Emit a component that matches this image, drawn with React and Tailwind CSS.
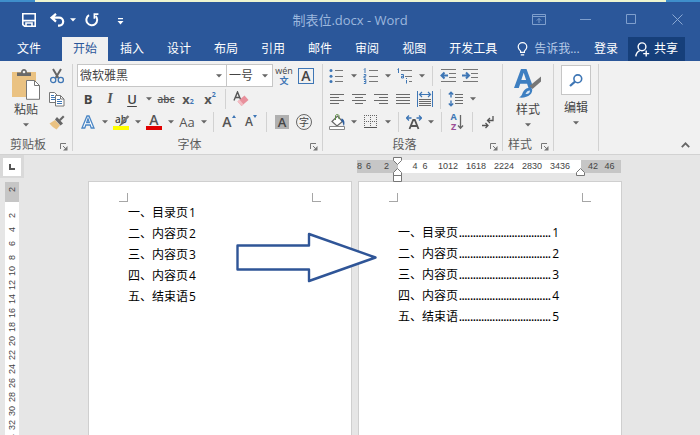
import clsx from 'clsx'

const TABS = ['插入', '设计', '布局', '引用', '邮件', '审阅', '视图', '开发工具']

const ENTRIES = [
  { mark: '一、', title: '目录页', page: 1 },
  { mark: '二、', title: '内容页', page: 2 },
  { mark: '三、', title: '内容页', page: 3 },
  { mark: '四、', title: '内容页', page: 4 },
  { mark: '五、', title: '结束语', page: 5 },
]

const LEADER = '.'.repeat(33)

const RULER_STEPS = ['4  6', '1012', '1618', '2224', '2830', '3436']
const SIDE_STEPS = [2, 4, 6, 8, 10, 12, 14, 16, 18, 20, 22, 24, 26, 28, 30, 32, 34]

/* ---------- small building blocks ---------- */

function Arrow({ className, color = '#666' }) {
  return (
    <svg width="6" height="4" viewBox="0 0 6 4" className={className} aria-hidden="true">
      <path d="M0 0.3h6L3 3.6z" fill={color} />
    </svg>
  )
}

function Caret({ className = 'w-3' }) {
  return (
    <button type="button" aria-label="更多" className={clsx('flex h-full shrink-0 items-center justify-center', className)}>
      <Arrow />
    </button>
  )
}

function Tool({ label, children }) {
  return (
    <button
      type="button"
      aria-label={label}
      className="flex h-full w-[22px] shrink-0 items-center justify-center hover:bg-[#d5e1f2]"
    >
      {children}
    </button>
  )
}

function Icon({ children }) {
  return (
    <svg width="16" height="16" viewBox="0 0 16 16" fill="none" aria-hidden="true">
      {children}
    </svg>
  )
}

function Divider() {
  return <div className="mx-1 h-5 w-px shrink-0 bg-[#d2d2d2]" />
}

function Row({ children }) {
  return <div className="flex h-[23px] items-center">{children}</div>
}

function Group({ title, launcher = true, className, children }) {
  return (
    <section className={clsx('flex shrink-0 pt-[3px]', className)}>
      <div className="flex min-w-0 flex-1 flex-col">
        <div className="h-[69px] shrink-0">{children}</div>
        <div className="flex h-6 shrink-0 items-center text-[#5c5c5c]">
          <span className="flex-1 text-center">{title}</span>
          {launcher && (
            <button type="button" aria-label={`${title}设置`} className="flex w-4 items-center pt-1 pl-1">
              <svg width="8" height="8" viewBox="0 0 8 8" fill="none" stroke="#777" aria-hidden="true">
                <path d="M0.5 6V0.5H6M3 3l3 3" />
                <path d="M7.5 3v4.5H3z" fill="#777" stroke="none" />
              </svg>
            </button>
          )}
        </div>
      </div>
      <div className="mb-[3px] w-px bg-[#d2d2d2]" />
    </section>
  )
}

/* ---------- title bar and tabs ---------- */

function TitleBar() {
  return (
    <header className="grid h-[35px] shrink-0 grid-cols-[1fr_auto_1fr] items-center text-white">
      <div className="flex items-center pl-[22px]">
        <button type="button" aria-label="保存">
          <svg width="14" height="14" viewBox="0 0 14 14" fill="none" stroke="#fff" strokeWidth="1.6" aria-hidden="true">
            <path d="M0.8 0.8h12.4v12.4H2.6L0.8 11.6zM1 7.6h12" />
            <path d="M4 13V10h6v3" />
          </svg>
        </button>
        <button type="button" aria-label="撤消" className="ml-[14px]">
          <svg width="15" height="14" viewBox="0 0 15 14" fill="none" stroke="#fff" strokeWidth="2.2" aria-hidden="true">
            <path d="M6 0.8L1.6 4.6 6 8.6M2 4.6h7.2a4 4 0 0 1 0 8H8" />
          </svg>
        </button>
        <button type="button" aria-label="撤消列表" className="ml-[5px]">
          <Arrow color="#fff" />
        </button>
        <button type="button" aria-label="重复" className="ml-[9px]">
          <svg width="14" height="14" viewBox="0 0 14 14" fill="none" stroke="#fff" strokeWidth="2" aria-hidden="true">
            <path d="M4 2.2A5.4 5.4 0 1 0 10.6 3" />
            <path d="M13.4 1.2H9.4v4.6" strokeWidth="1.7" />
          </svg>
        </button>
        <button type="button" aria-label="自定义快速访问工具栏" className="mt-1 ml-[18px]">
          <svg width="7" height="7" viewBox="0 0 7 7" aria-hidden="true">
            <path d="M1 0h5v1.2H1zM0.5 3h6L3.5 6.4z" fill="#fff" />
          </svg>
        </button>
      </div>
      <h1 className="text-[13px] text-[#9db8de]">制表位.docx - Word</h1>
      <div className="flex justify-end">
        <button type="button" aria-label="功能区显示选项" className="flex w-[46px] justify-center">
          <svg width="14" height="11" viewBox="0 0 14 11" fill="none" stroke="#7f9fcd" aria-hidden="true">
            <path d="M0.5 0.5h13v10H0.5zM0.5 2.5h13M7 9V4.5M4.8 6.6L7 4.4l2.2 2.2" />
          </svg>
        </button>
        <button type="button" aria-label="最小化" className="flex w-[46px] items-center justify-center">
          <svg width="11" height="1" viewBox="0 0 11 1" aria-hidden="true">
            <path d="M0 0h11v1H0z" fill="#7f9fcd" />
          </svg>
        </button>
        <button type="button" aria-label="最大化" className="flex w-[46px] justify-center">
          <svg width="10" height="10" viewBox="0 0 10 10" fill="none" stroke="#7f9fcd" aria-hidden="true">
            <path d="M0.5 0.5h9v9h-9z" />
          </svg>
        </button>
        <button type="button" aria-label="关闭" className="flex w-[46px] justify-center">
          <svg width="11" height="11" viewBox="0 0 11 11" fill="none" stroke="#8aa8d3" aria-hidden="true">
            <path d="M0.5 0.5l10 10M10.5 0.5l-10 10" />
          </svg>
        </button>
      </div>
    </header>
  )
}

function TabBar() {
  return (
    <nav className="flex h-6 shrink-0 items-stretch gap-px pr-[15px] pl-[6px] text-white">
      <button type="button" className="mr-[9px] shrink-0 px-[11px]">文件</button>
      <button type="button" className="shrink-0 bg-[#f1f1f1] px-[11px] text-[#2b579a]">开始</button>
      {TABS.map((tab) => (
        <button key={tab} type="button" className="shrink-0 px-[11px]">
          {tab}
        </button>
      ))}
      <button type="button" className="ml-2 flex shrink-0 items-center gap-[6px] text-[#b7cbe8]">
        <svg width="11" height="14" viewBox="0 0 11 14" fill="none" stroke="#fff" strokeWidth="1.2" aria-hidden="true">
          <path d="M3.6 10.4V9.2C2.2 7.8 1.2 6.8 1.2 4.9a4.3 4.3 0 0 1 8.6 0c0 1.9-1 2.9-2.4 4.3v1.2zM3.8 12.9h3.4" />
        </svg>
        告诉我...
      </button>
      <div className="ml-auto flex shrink-0 gap-[10px]">
        <button type="button">登录</button>
        <button type="button" className="flex items-center gap-1 bg-[#163f7a] px-[7px]">
          <svg width="15" height="15" viewBox="0 0 15 15" fill="none" stroke="#fff" strokeWidth="1.4" aria-hidden="true">
            <circle cx="7" cy="4.8" r="3.9" />
            <path d="M0.8 14.4c0.3-3 1.6-4.8 4-5.8M11.2 8.6v6M8.2 11.6h6" />
          </svg>
          共享
        </button>
      </div>
    </nav>
  )
}

/* ---------- ribbon ---------- */

function ClipboardGroup() {
  return (
    <Group title="剪贴板" className="w-[73px]">
      <div className="flex pl-[6px]">
        <button type="button" className="flex w-10 flex-col items-center pt-[5px] text-[#444]">
          <svg width="28" height="31" viewBox="0 0 28 31" aria-hidden="true">
            <path d="M0 3h24v25H0z" fill="#eac282" />
            <path d="M5 7V3.4h4C9 1.4 10.2 0 12 0s3 1.4 3 3.4h4V7z" fill="#6a6a6a" />
            <circle cx="12" cy="3" r="1.3" fill="#f1f1f1" />
            <path d="M14.5 11.5h8l5 5v13.8h-13z" fill="#fff" stroke="#777" />
            <path d="M22.5 11.5v5h5" fill="none" stroke="#777" />
          </svg>
          <span className="leading-[20px]">粘贴</span>
          <Arrow className="mt-[3px]" />
        </button>
        <div>
          <Row>
            <Tool label="剪切">
              <Icon>
                <path d="M4 1l5.4 9M12 1l-5.4 9" stroke="#666" strokeWidth="2" />
                <circle cx="4.2" cy="12" r="2.6" stroke="#3e76b5" strokeWidth="1.3" />
                <circle cx="11.8" cy="12" r="2.6" stroke="#3e76b5" strokeWidth="1.3" />
              </Icon>
            </Tool>
          </Row>
          <Row>
            <Tool label="复制">
              <Icon>
                <path d="M0.5 1.5h5l3 3v7h-8z" fill="#fff" stroke="#777" />
                <path d="M2 4.5h3M2 6.5h4M2 8.500h4" stroke="#3e76b5" />
                <path d="M6.5 4.5h5l3.5 3.500v7H6.500z" fill="#fff" stroke="#777" />
                <path d="M11.5 4.5V8H15" stroke="#777" />
                <path d="M8 8.5h3M8 10.5h5M8 12.500h5" stroke="#3e76b5" />
              </Icon>
            </Tool>
          </Row>
          <Row>
            <Tool label="格式刷">
              <Icon>
                <path d="M0.5 9.5L6 6l5 5.5-3.500 4C5 14 2.500 12 0.500 9.500z" fill="#eac282" />
                <path d="M6 5.5L8 3l6 6.5-2.500 2z" fill="#666" />
                <path d="M10 5.5l4-4L15.500 3l-4 4z" fill="#666" />
              </Icon>
            </Tool>
          </Row>
        </div>
      </div>
    </Group>
  )
}

function Combo({ label, value, className }) {
  return (
    <label className={clsx('relative flex h-[23px] shrink-0 items-center border border-[#c6c6c6] bg-white', className)}>
      <select aria-label={label} defaultValue={value} className="h-full w-full appearance-none bg-transparent pl-[2px] text-[#444] outline-none">
        <option>{value}</option>
      </select>
      <Arrow className="pointer-events-none absolute right-1" />
    </label>
  )
}

function FontGroup() {
  return (
    <Group title="字体" className="w-[250px]">
      <div className="pl-1">
        <Row>
          <Combo label="字体" value="微软雅黑" className="w-[150px]" />
          <Combo label="字号" value="一号" className="-ml-px w-[47px]" />
          <Tool label="拼音指南">
            <span className="flex flex-col items-center text-[9px] text-[#444]">
              <span className="leading-[10px]">wén</span>
              <span className="leading-[10px] font-bold text-[#3e76b5]">文</span>
            </span>
          </Tool>
          <Tool label="字符边框">
            <span className="flex size-4 items-center justify-center border border-[#3e76b5] text-[14px] font-semibold text-[#444]">A</span>
          </Tool>
        </Row>
        <Row>
          <Tool label="加粗">
            <span className="text-[13px] font-bold text-[#444]">B</span>
          </Tool>
          <Tool label="倾斜">
            <span className="font-['Liberation_Serif',serif] text-[14px] font-bold text-[#555] italic">I</span>
          </Tool>
          <Tool label="下划线">
            <span className="text-[13px] font-semibold text-[#444] underline underline-offset-2">U</span>
          </Tool>
          <Caret />
          <Tool label="删除线">
            <span className="text-[10px] font-semibold text-[#555] line-through">abc</span>
          </Tool>
          <Tool label="下标">
            <span className="text-[13px] font-bold text-[#555]">x</span>
            <span className="self-end text-[7px] font-bold text-[#3e76b5]">2</span>
          </Tool>
          <Tool label="上标">
            <span className="text-[13px] font-bold text-[#555]">x</span>
            <span className="self-start text-[7px] font-bold text-[#3e76b5]">2</span>
          </Tool>
          <Divider />
          <Tool label="清除所有格式">
            <Icon>
              <path d="M1 9.5L4.500 1 8 9.500M2.500 6.500h4" stroke="#555" strokeWidth="1.4" />
              <path d="M4.500 10.500l7-6 4 4.500-7 6z" fill="#e8909c" />
              <path d="M4.500 10.500l2-1.700 4 4.500-2 1.700z" fill="#f3bcc3" />
            </Icon>
          </Tool>
        </Row>
        <Row>
          <Tool label="文本效果">
            <Icon>
              <path d="M2 14L7 2h2l5 12h-2.800l-1-3H5.800l-1 3zM6.700 8.500h2.600L8 4.800z" fill="#fff" stroke="#4a86c5" strokeWidth="1.3" />
            </Icon>
          </Tool>
          <Caret className="w-[11px]" />
          <Tool label="突出显示">
            <span className="relative flex h-4 w-4 items-start justify-center text-[10px] leading-[10px] font-semibold text-[#444]">
              ab
              <svg width="17" height="16" viewBox="0 0 17 16" className="absolute inset-0" fill="none" aria-hidden="true">
                <path d="M0 12h16v4H0z" fill="#ffff00" />
                <path d="M15.500 2L9 8.500" stroke="#777" strokeWidth="2.4" />
                <path d="M9.500 7l2 2-4.500 3H6z" fill="#666" />
              </svg>
            </span>
          </Tool>
          <Caret className="w-[11px]" />
          <Tool label="字体颜色">
            <span className="flex h-4 w-4 flex-col items-center justify-end border-b-4 border-[#e00000] text-[14px] leading-[12px] font-semibold text-[#555]">A</span>
          </Tool>
          <Caret className="w-[11px]" />
          <Tool label="更改大小写">
            <span className="text-[13px] text-[#555]">Aa</span>
          </Tool>
          <Caret className="w-[11px]" />
          <Divider />
          <Tool label="增大字号">
            <span className="text-[14px] font-semibold text-[#555]">A</span>
            <svg width="4" height="3" viewBox="0 0 4 3" className="mt-[5px] self-start" aria-hidden="true">
              <path d="M2 0l2 3H0z" fill="#3e76b5" />
            </svg>
          </Tool>
          <Tool label="减小字号">
            <span className="text-[12px] font-semibold text-[#555]">A</span>
            <svg width="4" height="3" viewBox="0 0 4 3" className="mt-[5px] self-start" aria-hidden="true">
              <path d="M0 0h4L2 3z" fill="#3e76b5" />
            </svg>
          </Tool>
          <Divider />
          <Tool label="字符底纹">
            <span className="flex size-[14px] items-center justify-center bg-[#b0b0b0] text-[13px] font-semibold text-[#444]">A</span>
          </Tool>
          <Tool label="带圈字符">
            <span className="flex size-4 items-center justify-center rounded-full border border-[#666] text-[10px] text-[#444]">字</span>
          </Tool>
        </Row>
      </div>
    </Group>
  )
}

function Lines({ d }) {
  return (
    <Icon>
      <path d={d} stroke="#6a6a6a" />
    </Icon>
  )
}

function ParagraphGroup() {
  return (
    <Group title="段落" className="w-[180px]">
      <div className="pl-[3px]">
        <Row>
          <Tool label="项目符号">
            <Icon>
              <path d="M6 2.5h8M6 8.5h8M6 13.5h8" stroke="#777" />
              <circle cx="2" cy="2.5" r="1.5" fill="#3e76b5" />
              <circle cx="2" cy="8.3" r="1.5" fill="#3e76b5" />
              <circle cx="2" cy="13.5" r="1.5" fill="#3e76b5" />
            </Icon>
          </Tool>
          <Caret />
          <Tool label="编号">
            <Icon>
              <path d="M6 2.5h9M6 8.5h9M6 13.5h9" stroke="#777" />
              <path d="M1 1.5l1-1V5M0.800 6.500h2v1.800H1V10h2M0.800 11.500h2v4h-2M1 13.500h1.800" stroke="#3e76b5" />
            </Icon>
          </Tool>
          <Caret />
          <Tool label="多级列表">
            <Icon>
              <path d="M4 2.5h11M8 8.5h7M12 13.5h3" stroke="#777" />
              <path d="M0.500 1.500l1-1V5M4 6.500h2.500V10h-2V8.300H6M9.500 12v3.500M9.500 10v1" stroke="#3e76b5" />
            </Icon>
          </Tool>
          <Caret />
          <Divider />
          <Tool label="减少缩进量">
            <Icon>
              <path d="M1 1.5h15M9 5.5h7M9 9.5h7M1 13.5h15" stroke="#777" />
              <path d="M8 7.5H2M4.500 4.500l-3 3 3 3" stroke="#3e76b5" strokeWidth="2" />
            </Icon>
          </Tool>
          <Tool label="增加缩进量">
            <Icon>
              <path d="M1 1.5h15M9 5.5h7M9 9.5h7M1 13.5h15" stroke="#777" />
              <path d="M0 7.5h6M4 4.500l3 3-3 3" stroke="#3e76b5" strokeWidth="2" />
            </Icon>
          </Tool>
        </Row>
        <Row>
          <Tool label="左对齐">
            <Lines d="M1 3.5h14M1 6.5h9M1 9.5h14M1 12.5h9" />
          </Tool>
          <Tool label="居中">
            <Lines d="M1 3.5h14M4 6.5h8M1 9.5h14M4 12.5h8" />
          </Tool>
          <Tool label="右对齐">
            <Lines d="M1 3.5h14M6 6.5h9M1 9.5h14M6 12.5h9" />
          </Tool>
          <Tool label="两端对齐">
            <Lines d="M1 3.5h14M1 6.5h14M1 9.5h14M1 12.5h14" />
          </Tool>
          <Tool label="分散对齐">
            <Icon>
              <path d="M0.5 0v16M15.5 0v16" stroke="#3e76b5" />
              <path d="M2.5 3.5h11M5 1L2.500 3.500 5 6M11 1l2.500 2.500L11 6" stroke="#3e76b5" strokeWidth="1.2" />
              <path d="M2 8.5h12M2 10.5h12M2 12.5h12M2 14.5h12" stroke="#6a6a6a" />
            </Icon>
          </Tool>
          <Divider />
          <Tool label="行距">
            <Icon>
              <path d="M7 3.5h8M7 6.5h8M7 9.5h8M7 12.5h8" stroke="#6a6a6a" />
              <path d="M3 1v5.500M0.800 3.500L3 1.200l2.200 2.300M3 9.500V15M0.800 12.500L3 14.800l2.200-2.300" stroke="#3e76b5" strokeWidth="1.4" />
            </Icon>
          </Tool>
          <Caret />
        </Row>
        <Row>
          <Tool label="底纹">
            <Icon>
              <path d="M3 7.500L8.500 2l5 5.500L8 12z" fill="#fff" stroke="#666" strokeWidth="1.2" />
              <path d="M6.500 6V2c0-2 3.500-2 3.500 0v3" stroke="#5d8f45" />
              <path d="M12.500 4.500c3 0.500 3.500 4 2.500 7.500-1.500-2-0.500-4-3-5z" fill="#2f5f9e" />
              <path d="M0.500 12.500h15v3h-15z" fill="#fff" stroke="#888" />
            </Icon>
          </Tool>
          <Caret />
          <Tool label="边框">
            <Icon>
              <path d="M1.5 1v12M7.5 1v12M13.5 1v12M1 1.500h13M1 7.500h13" stroke="#666" strokeDasharray="1 1" />
              <path d="M1 13.5h13" stroke="#555" />
            </Icon>
          </Tool>
          <Caret />
          <Divider />
          <Tool label="中文版式">
            <Icon>
              <path d="M3.500 15L7.200 6h1.600l3.700 9M5 12h6" stroke="#555" strokeWidth="1.8" />
              <path d="M0.500 4h5M3 1.500L0.500 4 3 6.500M15.500 4h-5M13 1.500L15.500 4 13 6.500" stroke="#3e76b5" strokeWidth="1.3" />
            </Icon>
          </Tool>
          <Caret />
          <Divider />
          <Tool label="排序">
            <span className="flex items-center">
              <span className="flex flex-col text-[9px] leading-[10px] font-bold">
                <span className="text-[#3e76b5]">A</span>
                <span className="text-[#9b4f96]">Z</span>
              </span>
              <svg width="7" height="16" viewBox="0 0 7 16" fill="none" stroke="#666" strokeWidth="1.3" aria-hidden="true">
                <path d="M3.5 1v13M1 11.500l2.500 2.800L6 11.500" />
              </svg>
            </span>
          </Tool>
          <Divider />
          <Tool label="显示编辑标记">
            <Icon>
              <path d="M13 2v4.500H7.500M10 4L7.500 6.500 10 9" stroke="#555" strokeWidth="1.3" />
              <path d="M2 11.500h6M5.500 9L8 11.500 5.500 14" stroke="#555" strokeWidth="1.3" />
            </Icon>
          </Tool>
        </Row>
      </div>
    </Group>
  )
}

function StyleGroup() {
  return (
    <Group title="样式" className="w-[51px]">
      <button type="button" className="flex w-full flex-col items-center pt-[5px] text-[#444]">
        <svg width="28" height="31" viewBox="0 0 28 31" fill="none" aria-hidden="true">
          <path d="M0 19L7 0h5.500l7 19h-5l-1.400-4.300H6.200L4.800 19zM7.300 11h4.800L9.700 3.800z" fill="#3e7fc1" />
          <path d="M27 7.500v5L18.500 20l-3-3z" fill="#777" />
          <path d="M18 19.500c1.500 5-4 10-13 9 3.500-1.500 3-5 5.500-7.500 2.200-2.200 5.500-3 7.500-1.500z" fill="#3e7fc1" />
          <path d="M11.500 25c1-2.500 2.500-3.500 4.500-3.500 0 2.500-1.500 4-4.500 3.500z" fill="#dbe8f5" />
        </svg>
        <span className="leading-[20px]">样式</span>
        <Arrow className="mt-[3px]" />
      </button>
    </Group>
  )
}

function EditGroup() {
  return (
    <Group title="" launcher={false} className="w-[45px]">
      <button type="button" className="flex w-full flex-col items-center pt-px text-[#444]">
        <span className="flex size-[30px] items-center justify-center border border-[#c6c6c6] bg-white">
          <svg width="14" height="13" viewBox="0 0 14 13" fill="none" stroke="#3e76b5" aria-hidden="true">
            <circle cx="8.800" cy="4.800" r="3.900" strokeWidth="1.6" />
            <path d="M6 7.600L1 12" strokeWidth="2.2" />
          </svg>
        </span>
        <span className="mt-[3px] leading-[20px]">编辑</span>
        <Arrow className="mt-[3px]" />
      </button>
    </Group>
  )
}

function Ribbon() {
  return (
    <div className="flex h-[94px] shrink-0 border-b border-[#d2d2d2] bg-[#f1f1f1]">
      <ClipboardGroup />
      <FontGroup />
      <ParagraphGroup />
      <StyleGroup />
      <EditGroup />
      <button type="button" aria-label="折叠功能区" className="mt-auto mr-[10px] mb-[6px] ml-auto">
        <svg width="9" height="6" viewBox="0 0 9 6" fill="none" stroke="#666" strokeWidth="1.8" aria-hidden="true">
          <path d="M0.800 5.200L4.500 1.400 8.200 5.200" />
        </svg>
      </button>
    </div>
  )
}

/* ---------- document area ---------- */

function SideRuler() {
  return (
    <div className="flex w-6 shrink-0 flex-col overflow-hidden">
      <div className="mb-1 flex h-[23px] w-6 shrink-0 items-center justify-center bg-[#d9d9d9]">
        <button type="button" aria-label="制表符" className="flex size-[18px] items-center justify-center bg-white">
          <svg width="6" height="6" viewBox="0 0 6 6" fill="none" stroke="#555" strokeWidth="2" aria-hidden="true">
            <path d="M1 0v5h5" />
          </svg>
        </button>
      </div>
      <div className="ml-[5px] flex w-[14px] flex-1 flex-col bg-white font-['Liberation_Sans',sans-serif] text-[9px] leading-[14px] text-[#444]">
        <div className="mb-[6px] h-5 shrink-0 bg-[#c6c6c6]">
          <span className="block h-[14px] rotate-180 text-center [writing-mode:vertical-rl]">2</span>
        </div>
        {SIDE_STEPS.map((n) => (
          <span key={n} className="h-[14px] shrink-0 rotate-180 text-center [writing-mode:vertical-rl]">
            {n}
          </span>
        ))}
      </div>
    </div>
  )
}

function TopRuler() {
  return (
    <div className="relative mt-[5px] -ml-0.5 flex h-[13px] font-['Liberation_Sans',sans-serif] text-[9px] leading-[13px] text-[#444]">
      <div className="flex w-[41px] bg-[#c6c6c6]">
        <span className="w-[9px]">8</span>
        <span className="w-[18px]">6</span>
        <span className="w-[9px]">2</span>
      </div>
      <div className="flex flex-1 bg-white pl-2">
        {RULER_STEPS.map((step) => (
          <span key={step} className="w-7 text-center whitespace-pre">
            {step}
          </span>
        ))}
      </div>
      <div className="flex w-10 bg-[#c6c6c6] pl-[7px]">
        <span className="w-[18px]">42</span>
        <span className="w-[18px]">46</span>
      </div>
      {/* indent handles */}
      <svg width="9" height="25" viewBox="0 0 9 25" className="absolute -top-[3px] left-9" fill="#fff" stroke="#777" aria-hidden="true">
        <path d="M0.5 0.5h8v3l-4 4-4-4zM0.5 18.5v-3l4-4 4 4v3zM0.5 18.5h8v6h-8z" />
      </svg>
      <svg width="9" height="8" viewBox="0 0 9 8" className="absolute top-2 right-9" fill="#fff" stroke="#777" aria-hidden="true">
        <path d="M0.5 7.5v-3l4-4 4 4v3z" />
      </svg>
    </div>
  )
}

function Page({ children }) {
  return (
    <article className="flex-1 bg-white px-[30px] pt-[11px] shadow-[0_0_0_1px_#cfcfcf]">
      <div className="mb-px flex justify-between">
        <i className="size-[9px] border-r border-b border-[#a6a6a6]" />
        <i className="size-[9px] border-b border-l border-[#a6a6a6]" />
      </div>
      {children}
    </article>
  )
}

function DocumentArea() {
  return (
    <main className="flex min-h-0 flex-1 bg-[#e6e6e6]">
      <SideRuler />
      <div className="flex-1 pr-[79px] pl-[65px]">
        <div className="relative grid h-full grid-cols-2 gap-2 text-black">
          <div className="flex flex-col pt-[27px]">
            <Page>
              <ul className="pl-[9px] leading-[20px]">
                {ENTRIES.map((entry) => (
                  <li key={entry.page} className="flex h-[21px] items-baseline gap-px">
                    <span>{entry.mark}{entry.title}</span>
                    <span>{entry.page}</span>
                  </li>
                ))}
              </ul>
            </Page>
          </div>
          <div className="flex flex-col">
            <div className="h-[27px]">
              <TopRuler />
            </div>
            <Page>
              <ul className="mt-[21px] pr-8 pl-[9px] leading-[20px]">
                {ENTRIES.map((entry) => (
                  <li key={entry.page} className="flex h-[21px] items-baseline gap-px">
                    <span className="shrink-0">{entry.mark}{entry.title}</span>
                    <span className="flex-1 overflow-hidden font-['Liberation_Sans',sans-serif] text-[10px] leading-[12px] font-bold">{LEADER}</span>
                    <span>{entry.page}</span>
                  </li>
                ))}
              </ul>
            </Page>
          </div>
          <svg width="144" height="54" viewBox="0 0 144 54" className="absolute top-[75px] left-[145px]" aria-hidden="true">
            <path
              d="M3.500 15.500H75V4l66.500 23.500L75 51V39.500H3.500z"
              fill="#fff"
              stroke="#2f5597"
              strokeWidth="2.4"
              strokeLinejoin="round"
            />
          </svg>
        </div>
      </div>
    </main>
  )
}

export default function App() {
  return (
    <div className="flex h-screen flex-col overflow-hidden bg-[#2b579a] font-['Open_Sans','Noto_Sans_CJK_SC',sans-serif] text-[12px] leading-[16px]">
      <div className="flex h-0.5 shrink-0">
        <div className="w-[35px] bg-[#3f8fcb]" />
        <div className="flex-1 bg-[#eef5d0]" />
        <div className="w-[34px] bg-[#3f8fcb]" />
      </div>
      <TitleBar />
      <TabBar />
      <Ribbon />
      <DocumentArea />
    </div>
  )
}
